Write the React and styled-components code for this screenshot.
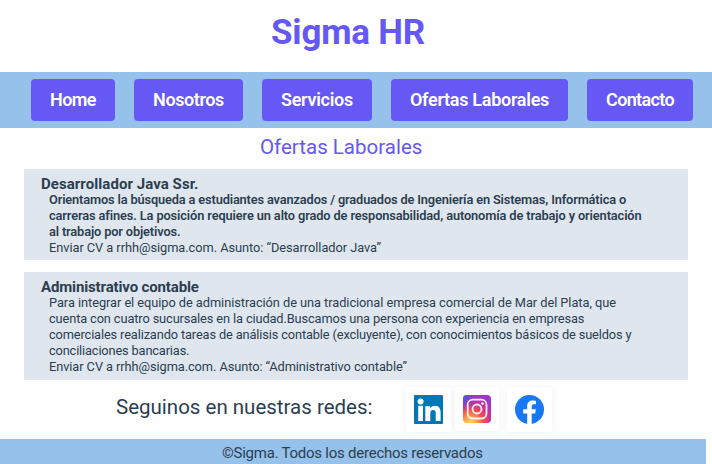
import React from "react";
import styled, { createGlobalStyle } from "styled-components";

const GlobalStyle = createGlobalStyle`
  * { box-sizing: border-box; margin: 0; padding: 0; }
  body { background: #fefefe; color: #2c3e50; font-family: Roboto, "Liberation Sans", sans-serif; }
`;

const Page = styled.div`
  width: 712px;
  height: 464px;
  overflow: hidden;
  display: flex;
  flex-direction: column;
`;

const Tracked = styled.span`
  letter-spacing: ${(p) => p.$track}px;
`;

const Title = styled.h1`
  height: 72px;
  padding: 12px 0 0 271px;
  background: #fff;
  color: #6558f5;
  font-size: 35px;
  line-height: 41px;
  font-weight: 700;
  white-space: nowrap;
`;

const Nav = styled.nav`
  height: 56px;
  display: flex;
  align-items: center;
  gap: 19px;
  padding-left: 31px;
  background: #95c1eb;
`;

const NavLink = styled.a`
  width: ${(p) => p.$width}px;
  height: 42px;
  display: flex;
  align-items: center;
  justify-content: center;
  padding-bottom: 2px;
  border-radius: 4px;
  background: #6558f5;
  color: #fff;
  font-size: 18px;
  font-weight: 600;
  white-space: nowrap;
`;

const Subtitle = styled.h2`
  height: 41px;
  padding: 7px 0 0 260px;
  color: #6558f5;
  font-size: 20.5px;
  line-height: 24px;
  font-weight: 400;
`;

const Offers = styled.main`
  display: flex;
  flex-direction: column;
  gap: 12px;
  padding: 0 24px;
`;

const Card = styled.article`
  height: ${(p) => p.$height}px;
  padding: 7px 0 0 17px;
  background: #dfe6ee;
`;

const CardTitle = styled.h3`
  height: 16px;
  font-size: 15px;
  line-height: 17px;
  font-weight: 700;
`;

const Line = styled.p`
  padding-left: 8px;
  font-size: 12.8px;
  line-height: 16px;
  font-weight: ${(p) => (p.$strong ? 600 : 400)};
  white-space: nowrap;
`;

const Social = styled.section`
  height: 59px;
  display: flex;
  align-items: flex-start;
  padding: 7px 0 0 116px;
`;

const SocialLabel = styled.p`
  width: 290px;
  padding-top: 8px;
  font-size: 20.5px;
  line-height: 24px;
`;

const Tile = styled.a`
  width: ${(p) => p.$size}px;
  height: ${(p) => p.$size}px;
  margin-right: ${(p) => p.$gap}px;
  padding: 8px;
  border-radius: 3px;
  background: #fff;
  box-shadow: 0 1px 8px rgba(0, 0, 0, 0.05);
  svg { display: block; width: 100%; height: 100%; }
`;

const Footer = styled.footer`
  width: 706px;
  height: 25px;
  padding: 5px 0 0 222px;
  background: #95c1eb;
  font-size: 15px;
  line-height: 18px;
  white-space: nowrap;
`;

const links = [
  { text: "Home", width: 84, track: -0.6 },
  { text: "Nosotros", width: 109, track: -0.4 },
  { text: "Servicios", width: 110, track: -0.28 },
  { text: "Ofertas Laborales", width: 177, track: -0.28 },
  { text: "Contacto", width: 106, track: -0.65 },
];

const offers = [
  {
    title: "Desarrollador Java Ssr.",
    track: 0.06,
    height: 91,
    lines: [
      { text: "Orientamos la búsqueda a estudiantes avanzados / graduados de Ingeniería en Sistemas, Informática o", track: -0.145, strong: true },
      { text: "carreras afines. La posición requiere un alto grado de responsabilidad, autonomía de trabajo y orientación", track: -0.115, strong: true },
      { text: "al trabajo por objetivos.", track: -0.14, strong: true },
      { text: "Enviar CV a rrhh@sigma.com. Asunto: “Desarrollador Java”", track: -0.045 },
    ],
  },
  {
    title: "Administrativo contable",
    track: -0.14,
    height: 108,
    lines: [
      { text: "Para integrar el equipo de administración de una tradicional empresa comercial de Mar del Plata, que", track: -0.05 },
      { text: "cuenta con cuatro sucursales en la ciudad.Buscamos una persona con experiencia en empresas", track: -0.118 },
      { text: "comerciales realizando tareas de análisis contable (excluyente), con conocimientos básicos de sueldos y", track: -0.13 },
      { text: "conciliaciones bancarias.", track: -0.15 },
      { text: "Enviar CV a rrhh@sigma.com. Asunto: “Administrativo contable”", track: -0.072 },
    ],
  },
];

const LinkedIn = () => (
  <svg viewBox="0 0 29 29">
    <rect width="29" height="29" rx="1" fill="#0077b5" />
    <g fill="#fff">
      <circle cx="6.6" cy="6.4" r="3" />
      <path d="M4.2 10.8H9V26H4.2zM11.3 11.2h4.8v2c.8-1.4 2.4-2.4 4.7-2.4 4.5 0 5.8 2.8 5.8 7V26h-4.9v-7.3c0-2-.3-3.6-2.5-3.6s-2.9 1.5-2.9 3.6V26h-5z" />
    </g>
  </svg>
);

const Instagram = () => (
  <svg viewBox="0 0 28 28">
    <defs>
      <radialGradient id="warm" cx="7" cy="29" r="28" gradientUnits="userSpaceOnUse">
        <stop offset="0" stopColor="#ffe15a" />
        <stop offset=".25" stopColor="#ffa047" />
        <stop offset=".5" stopColor="#f4504f" />
        <stop offset=".75" stopColor="#cb3199" />
        <stop offset="1" stopColor="#a036c8" />
      </radialGradient>
      <radialGradient id="cool" cx="-2" cy="1" r="17" gradientUnits="userSpaceOnUse">
        <stop offset="0" stopColor="#3d62e0" />
        <stop offset=".4" stopColor="#5b50d6" stopOpacity=".8" />
        <stop offset="1" stopColor="#8a3ac8" stopOpacity="0" />
      </radialGradient>
    </defs>
    <rect width="28" height="28" rx="4" fill="url(#warm)" />
    <rect width="28" height="28" rx="4" fill="url(#cool)" />
    <g fill="none" stroke="#fff" strokeOpacity=".92" strokeWidth="1.8">
      <rect x="4.7" y="4.7" width="18.8" height="18.8" rx="5" />
      <circle cx="14" cy="14" r="4.5" />
    </g>
    <circle cx="19.5" cy="8.6" r="1.3" fill="#fff" />
  </svg>
);

const Facebook = () => (
  <svg viewBox="0 0 29 29">
    <circle cx="14.5" cy="14.5" r="14.5" fill="#1877f2" />
    <path fill="#fff" d="M12.2 29V18.5H8.2v-4.2h4v-3.2c0-3.7 2.2-5.7 5.5-5.7 1.6 0 3.2.3 3.2.3v3.5H19c-1.8 0-2.3 1.1-2.3 2.3v2.8h4.1l-.6 4.2h-3.5V29z" />
  </svg>
);

export default function App() {
  return (
    <Page>
      <GlobalStyle />
      <Title><Tracked $track={-0.2}>Sigma HR</Tracked></Title>
      <Nav>
        {links.map((l) => (
          <NavLink key={l.text} $width={l.width}><Tracked $track={l.track}>{l.text}</Tracked></NavLink>
        ))}
      </Nav>
      <Subtitle>Ofertas Laborales</Subtitle>
      <Offers>
        {offers.map((o) => (
          <Card key={o.title} $height={o.height}>
            <CardTitle><Tracked $track={o.track}>{o.title}</Tracked></CardTitle>
            {o.lines.map((l) => (
              <Line key={l.text} $strong={l.strong}><Tracked $track={l.track}>{l.text}</Tracked></Line>
            ))}
          </Card>
        ))}
      </Offers>
      <Social>
        <SocialLabel>Seguinos en nuestras redes:</SocialLabel>
        <Tile $size={45} $gap={4}><LinkedIn /></Tile>
        <Tile $size={44} $gap={8}><Instagram /></Tile>
        <Tile $size={45} $gap={0}><Facebook /></Tile>
      </Social>
      <Footer><Tracked $track={-0.24}>©Sigma. Todos los derechos reservados</Tracked></Footer>
    </Page>
  );
}
